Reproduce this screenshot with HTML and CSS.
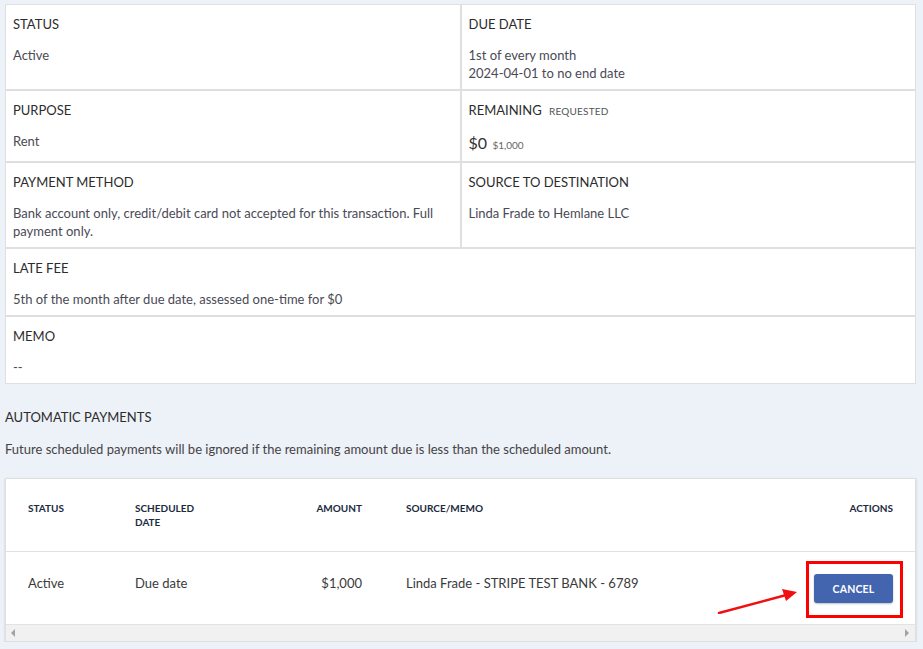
FILE: index.html
```html
<!DOCTYPE html>
<html lang="en">
<head>
<meta charset="utf-8">
<title>Recurring charge</title>
<link rel="stylesheet" href="styles.css">
</head>
<body>
<main class="page">
  <section class="info-grid">
    <div class="cell">
      <div class="label">Status</div>
      <div class="value">Active</div>
    </div>
    <div class="cell">
      <div class="label">Due Date</div>
      <div class="value">1st of every month<br>2024-04-01 to no end date</div>
    </div>
    <div class="cell">
      <div class="label">Purpose</div>
      <div class="value">Rent</div>
    </div>
    <div class="cell">
      <div class="label">Remaining <span class="sublabel">Requested</span></div>
      <div class="value amount"><span class="big">$0</span> <span class="small">$1,000</span></div>
    </div>
    <div class="cell">
      <div class="label">Payment Method</div>
      <div class="value">Bank account only, credit/debit card not accepted for this transaction. Full payment only.</div>
    </div>
    <div class="cell">
      <div class="label">Source to Destination</div>
      <div class="value">Linda Frade to Hemlane LLC</div>
    </div>
    <div class="cell wide">
      <div class="label">Late Fee</div>
      <div class="value">5th of the month after due date, assessed one-time for $0</div>
    </div>
    <div class="cell wide">
      <div class="label">Memo</div>
      <div class="value">--</div>
    </div>
  </section>

  <h2 class="section-title">Automatic Payments</h2>
  <p class="section-note">Future scheduled payments will be ignored if the remaining amount due is less than the scheduled amount.</p>

  <section class="table-card">
    <table class="payments">
      <colgroup>
        <col class="c-status">
        <col class="c-date">
        <col class="c-amount">
        <col class="c-source">
        <col class="c-actions">
      </colgroup>
      <thead>
        <tr>
          <th>Status</th>
          <th><span class="narrow">Scheduled Date</span></th>
          <th class="right">Amount</th>
          <th>Source/Memo</th>
          <th class="right">Actions</th>
        </tr>
      </thead>
      <tbody>
        <tr>
          <td>Active</td>
          <td>Due date</td>
          <td class="right">$1,000</td>
          <td>Linda Frade - STRIPE TEST BANK - 6789</td>
          <td class="right">
            <span class="btn-wrap">
              <button class="btn-cancel" type="button">CANCEL</button>
              <span class="highlight-box"></span>
              <svg class="arrow" width="90" height="40" viewBox="0 0 90 40">
                <line x1="5" y1="39" x2="76" y2="20" stroke="#f01010" stroke-width="2.5" stroke-linecap="round"/>
                <polygon points="83,18 68,15 72,27" fill="#f01010"/>
              </svg>
            </span>
          </td>
        </tr>
      </tbody>
    </table>
    <div class="hscroll">
      <span class="tri-left"></span>
      <span class="tri-right"></span>
    </div>
  </section>
</main>
</body>
</html>
```

FILE: styles.css
```css
* { box-sizing: border-box; }

html, body {
  margin: 0;
  padding: 0;
  background: #edf1f8;
}

body {
  font-family: Lato, "Open Sans", "Liberation Sans", sans-serif;
  font-size: 13px;
  color: #333;
}

.page {
  padding: 4px 7px 0 5px;
}

.info-grid {
  display: grid;
  grid-template-columns: 1fr 1fr;
  background: #fff;
}

.cell {
  border: 1px solid #dfdfdf;
  padding: 9px 8px 7px 7px;
  background: #fff;
}

.cell.wide {
  grid-column: 1 / span 2;
}

.label {
  text-transform: uppercase;
  line-height: 20px;
  height: 20px;
  color: #2c2c2c;
  margin-bottom: 12px;
}

.sublabel {
  font-size: 10px;
  color: #555;
  margin-left: 4px;
  letter-spacing: 0.2px;
}

.value {
  line-height: 18px;
  color: #4a4a55;
}

.value.amount {
  line-height: 22px;
  height: 22px;
}

.value .big {
  font-size: 16px;
  color: #333;
}

.value .small {
  font-size: 10px;
  color: #666;
  margin-left: 2px;
}

.section-title {
  margin: 23px 0 0;
  font-size: 13px;
  font-weight: 400;
  text-transform: uppercase;
  line-height: 20px;
  color: #2c2c2c;
}

.section-note {
  margin: 12px 0 0;
  line-height: 20px;
  color: #444;
}

.table-card {
  margin-top: 19px;
  background: #fff;
  border: 1px solid #dfdfdf;
  box-shadow: 0 1px 2px rgba(0, 0, 0, 0.18);
}

.payments {
  width: 100%;
  border-collapse: collapse;
  table-layout: fixed;
}

.c-status { width: 107px; }
.c-date { width: 130px; }
.c-amount { width: 141px; }
.c-source { width: 400px; }
.c-actions { width: auto; }

.payments th {
  text-align: left;
  vertical-align: top;
  font-size: 10px;
  font-weight: 700;
  text-transform: uppercase;
  line-height: 14px;
  color: #1b2a40;
  padding: 22px 22px 22px;
  border-bottom: 1px solid #e2e2e2;
}

.payments th .narrow {
  display: inline-block;
  max-width: 70px;
}

.payments td {
  vertical-align: top;
  padding: 22px 22px 21px;
  line-height: 18px;
  color: #3a3a3a;
}

.payments .right {
  text-align: right;
}

.btn-wrap {
  position: relative;
  display: inline-block;
  vertical-align: top;
}

.btn-cancel {
  display: block;
  width: 79px;
  height: 29px;
  border: 0;
  border-radius: 3px;
  background: #4364ae;
  color: #fff;
  font-family: inherit;
  font-size: 10.5px;
  font-weight: 700;
  letter-spacing: 0.2px;
  box-shadow: 0 1px 2px rgba(0, 0, 0, 0.25);
  padding: 0;
  margin: 0;
}

.highlight-box {
  position: absolute;
  left: -8px;
  top: -13px;
  right: -10px;
  bottom: -15px;
  border: 3px solid #ff0000;
}

.arrow {
  position: absolute;
  left: -100px;
  top: 0;
}

.hscroll {
  position: relative;
  height: 17px;
  background: #f1f1f1;
  border-top: 1px solid #e2e2e2;
}

.tri-left,
.tri-right {
  position: absolute;
  top: 4px;
  width: 0;
  height: 0;
  border-top: 4px solid transparent;
  border-bottom: 4px solid transparent;
}

.tri-left {
  left: 5px;
  border-right: 4px solid #a3a3a3;
}

.tri-right {
  right: 6px;
  border-left: 4px solid #a3a3a3;
}
```
